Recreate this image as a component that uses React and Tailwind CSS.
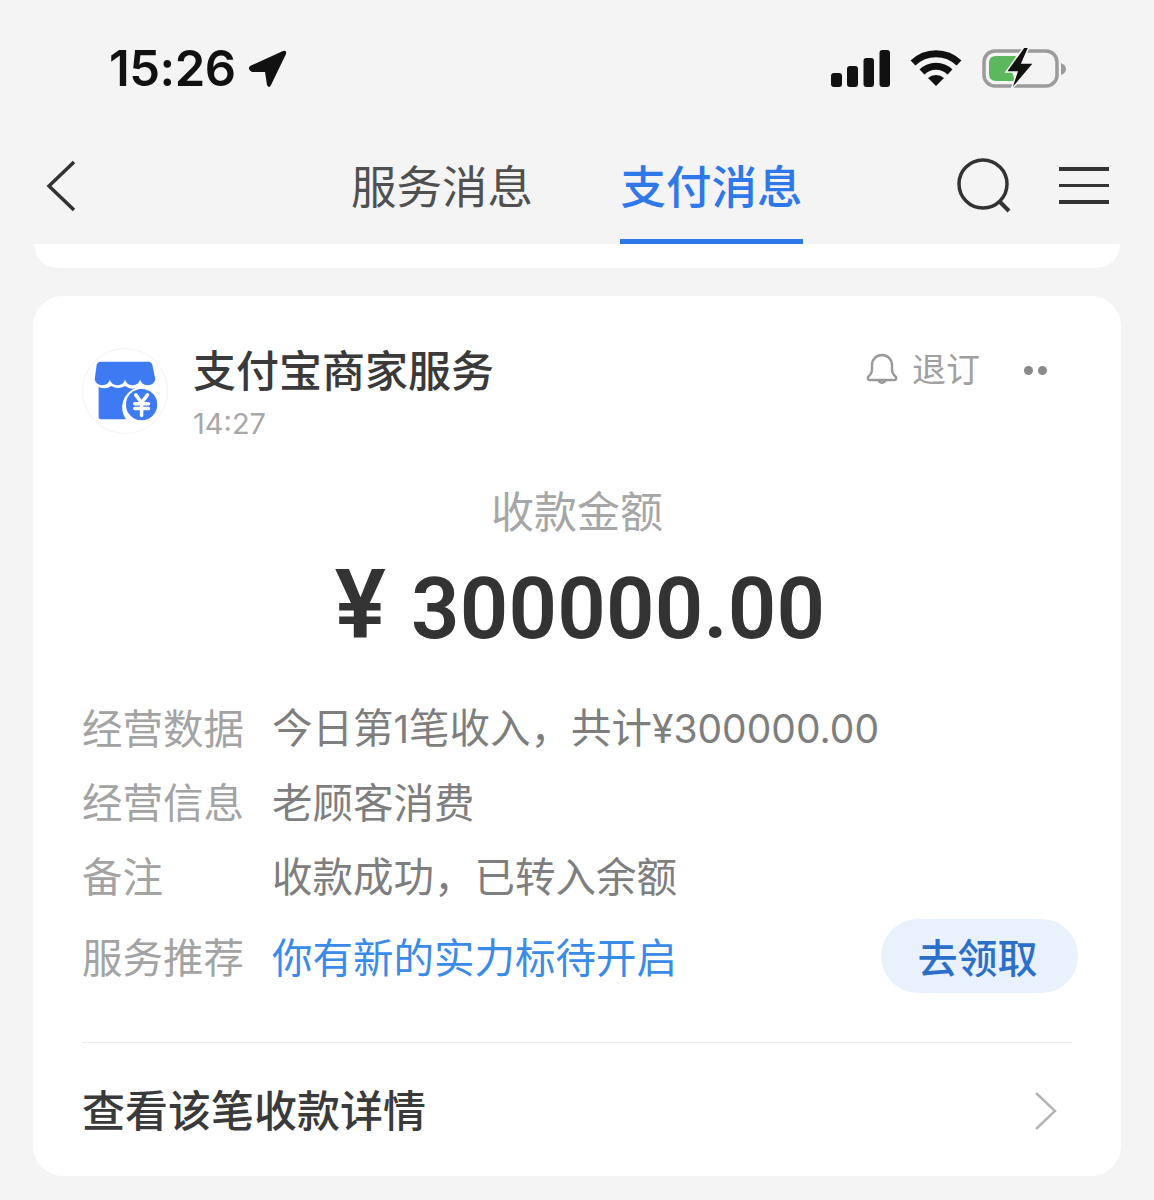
import React from "react";

const CJK = { fontFamily: '"Noto Sans CJK SC", "Noto Sans", sans-serif' };
const NUM = { fontFamily: "Inter, sans-serif" };

function Row({ label, children }) {
  return (
    <div className="flex items-center h-[74px]">
      <div className="w-[190px] text-[40.500px] leading-[74px] text-[#a3a3a3] whitespace-nowrap">{label}</div>
      <div className="text-[40.500px] leading-[74px] whitespace-nowrap text-[#7e7e7e]">{children}</div>
    </div>
  );
}

function Shop() {
  return (
    <div className="w-[86px] h-[86px] rounded-full bg-white border border-[#f3f3f3] flex items-center justify-center shrink-0">
      <svg width="86" height="86" viewBox="0 0 86 86">
        <path d="M18 13 H67 Q70 13 71 16 L74 31 A7.750 6 0 0 1 58.500 31 A7.750 6 0 0 1 43 31 A7.750 6 0 0 1 27.500 31 A7.750 6 0 0 1 12 31 L14 16 Q15 13 18 13 Z" fill="#3e7bf2" />
        <path d="M16 39 Q23 42 29 38 Q36 42 43 38 Q49 42 54 40 A21 21 0 0 0 44 72 H19 Q16 72 16 69 Z" fill="#3e7bf2" />
        <circle cx="60" cy="57" r="16" fill="#3e7bf2" />
        <path d="M54 47 L60 55 L66 47 M53 56 H67 M53 61 H67 M60 55 V68" stroke="#fff" strokeWidth="3.600" fill="none" strokeLinecap="round" strokeLinejoin="round" />
      </svg>
    </div>
  );
}

export default function App() {
  return (
    <div className="w-[1154px] h-[1200px] bg-[#f4f4f4] overflow-hidden" style={CJK}>
      {/* status bar */}
      <div className="h-[130px] flex items-start justify-between pl-[109px] pr-[87px] pt-[43px]">
        <div className="flex items-center gap-[12px] h-[52px]">
          <span className="text-[49px] font-semibold text-[#111] tracking-[-0.5px]" style={NUM}>15:26</span>
          <svg className="-ml-[1px]" width="42" height="40" viewBox="0 0 42 40">
            <path d="M3 17 L36 2 Q40 1 39 5 L24 36 Q22 40 20 36 L18 23 L5 23 Q0 20 3 17 Z" fill="#111" />
          </svg>
        </div>
        <div className="flex items-center gap-[20px] h-[52px]">
          <svg width="60" height="38" viewBox="0 0 60 38">
            <rect x="1" y="23" width="11" height="14" rx="3" fill="#111" />
            <rect x="17" y="16" width="11" height="21" rx="3" fill="#111" />
            <rect x="33.500" y="8" width="10.500" height="29" rx="3" fill="#111" />
            <rect x="49.500" y="0" width="10.500" height="37" rx="3" fill="#111" />
          </svg>
          <svg width="52" height="38" viewBox="0 0 52 38">
            <path d="M3 13 A33 33 0 0 1 49 13" stroke="#111" strokeWidth="7" fill="none" />
            <path d="M12 22 A20 20 0 0 1 40 22" stroke="#111" strokeWidth="7" fill="none" />
            <path d="M18 28 L26 36 L34 28 A12 12 0 0 0 18 28 Z" fill="#111" />
          </svg>
          <svg width="85" height="42" viewBox="0 0 85 42">
            <rect x="2" y="3" width="73" height="35" rx="11" fill="none" stroke="#9b9b9b" strokeWidth="3.500" />
            <path d="M14 8 H34 L29 21 L33 33 H14 Q7 33 7 26 V15 Q7 8 14 8 Z" fill="#5cb85c" />
            <path d="M42 -1 L24 24 H35 L29 42 L52 15 H40 L47 -1 Z" fill="#111" stroke="#f4f4f4" strokeWidth="1.500" />
            <path d="M79 15 Q84 17 84 21 Q84 25 79 27 Z" fill="#9b9b9b" />
          </svg>
        </div>
      </div>

      {/* nav */}
      <div className="h-[114px] relative flex items-start">
        <svg className="absolute left-[44px] top-[29px]" width="34" height="54" viewBox="0 0 34 54">
          <path d="M30 3 L5 27 L30 51" stroke="#333" strokeWidth="3.500" fill="none" />
        </svg>
        <div className="ml-[351px] flex gap-[87px]">
          <div className="h-[109px] pt-[22px] text-[45.500px] leading-[64px] text-[#505050]">服务消息</div>
          <div className="flex flex-col items-center">
            <div className="h-[109px] pt-[22px] text-[45.500px] leading-[64px] text-[#2f78ea] font-medium">支付消息</div>
            <div className="h-[5px] w-[183px] bg-[#2f78ea]" />
          </div>
        </div>
        <svg className="absolute left-[956px] top-[28px]" width="56" height="58" viewBox="0 0 56 58">
          <circle cx="27" cy="26" r="24" fill="none" stroke="#333" strokeWidth="3.500" />
          <path d="M43 43 L53 53" stroke="#333" strokeWidth="4" />
        </svg>
        <div className="absolute left-[1059px] top-[37px] w-[50px] flex flex-col gap-[13px]">
          <div className="h-[3.500px] bg-[#333]" />
          <div className="h-[3.500px] bg-[#333]" />
          <div className="h-[3.500px] bg-[#333]" />
        </div>
      </div>

      {/* previous card sliver */}
      <div className="mx-[34px] h-[24px] bg-white rounded-b-[26px]" />

      {/* main card */}
      <div className="ml-[33px] mr-[33px] mt-[28px] h-[880px] bg-white rounded-[30px] pt-[52px] px-[49px] flex flex-col">
        <div className="flex items-start">
          <Shop />
          <div className="ml-[25px] flex-1 -mt-[7px]">
            <div className="text-[43px] leading-[54px] text-[#3a3a3a] whitespace-nowrap font-medium">支付宝商家服务</div>
            <div className="text-[29px] leading-[44px] mt-[7px] text-[#a8a8a8]" style={NUM}>14:27</div>
          </div>
          <div className="flex items-center h-[44px] mr-[25px]">
            <svg width="32" height="36" viewBox="0 0 32 36">
              <path d="M2 25 Q6 22 6 17 V13 A10 10 0 0 1 26 13 V17 Q26 22 30 25 Q31 28 28 28 H4 Q1 28 2 25 Z M12 28 Q16 34 20 28" fill="none" stroke="#9a9a9a" strokeWidth="2.400" />
            </svg>
            <span className="ml-[14px] -mt-[5px] text-[34px] text-[#a0a0a0] leading-[44px]">退订</span>
            <div className="ml-[44px] flex gap-[5px]">
              <div className="w-[9px] h-[9px] rounded-full bg-[#8a8a8a]" />
              <div className="w-[9px] h-[9px] rounded-full bg-[#8a8a8a]" />
            </div>
          </div>
        </div>

        <div className="mt-[33px] text-center text-[43px] leading-[60px] text-[#a6a6a6]">收款金额</div>
        <div className="mt-[11px] pl-[9px] flex items-baseline justify-center text-[85px] leading-[110px] font-semibold text-[#333] whitespace-nowrap" style={{ fontFamily: "Roboto, sans-serif" }}>
          <span className="text-[96px] leading-[110px] -ml-[3px] mr-[25px]">¥</span>
          <span className="tracking-[0.2px]">300000.00</span>
        </div>

        <div className="mt-[26px] flex flex-col">
          <Row label="经营数据">
            今日第<span className="text-[38px]" style={NUM}>1</span>笔收入，共计<span className="text-[39px]" style={NUM}>¥300000.00</span>
          </Row>
          <Row label="经营信息">老顾客消费</Row>
          <Row label="备注">收款成功，已转入余额</Row>
          <div className="flex items-center h-[88px]">
            <div className="w-[190px] text-[40.500px] text-[#a3a3a3] whitespace-nowrap">服务推荐</div>
            <div className="text-[40.500px] text-[#3a8be8] whitespace-nowrap">你有新的实力标待开启</div>
            <div className="ml-auto -mr-[6px] w-[197px] h-[74px] pr-[4px] rounded-full bg-[#e8f1fc] flex items-center justify-center text-[40px] text-[#2c6fc9] font-medium">去领取</div>
          </div>
        </div>

        <div className="mt-[42px] h-px bg-[#eeeeee]" />
        <div className="flex items-center justify-between h-[132px] -mt-[1px]">
          <span className="text-[43px] text-[#3a3a3a] whitespace-nowrap font-medium">查看该笔收款详情</span>
          <svg className="mr-[13px] mt-[6px]" width="26" height="42" viewBox="0 0 26 42">
            <path d="M3 3 L22 21 L3 39" stroke="#b5b5b5" strokeWidth="2.500" fill="none" />
          </svg>
        </div>
      </div>
    </div>
  );
}
